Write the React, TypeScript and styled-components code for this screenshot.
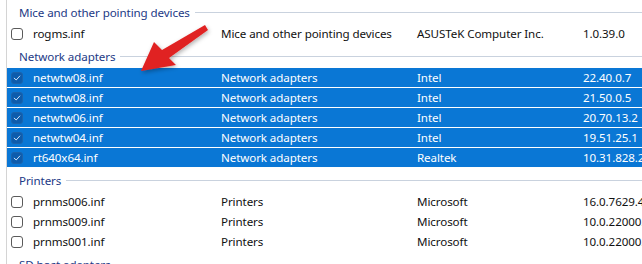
import React from "react";
import styled, { createGlobalStyle } from "styled-components";

const Global = createGlobalStyle`
  html, body { margin: 0; padding: 0; background: #fff; overflow: hidden; }
  body { font-family: "Noto Sans", "Open Sans", sans-serif; }
`;

const Page = styled.div`
  position: relative;
  width: 642px;
  height: 264px;
  overflow: hidden;
  background: #fff;
`;

const List = styled.div`
  margin-left: 6px;
  margin-top: -1px;
  border-left: 1px solid #d4d4d4;
  min-height: 280px;
  display: flex;
  flex-direction: column;
`;

const GroupHeader = styled.div`
  height: 24px;
  box-sizing: border-box;
  padding: 3px 0 1px 12px;
  display: flex;
  align-items: center;
  gap: 5px;
  font-size: 11.6px;
  letter-spacing: -0.1px;
  color: #1d3a86;
  white-space: nowrap;
  &::after {
    content: "";
    flex: 1;
    height: 1px;
    background: #c9d2de;
  }
`;

const Row = styled.div<{ $selected?: boolean }>`
  height: 20px;
  box-sizing: border-box;
  border-top: 1px solid #fff;
  display: grid;
  grid-template-columns: 22px 188px 196px 166px 1fr;
  align-items: center;
  padding-left: 4px;
  font-size: 11.6px;
  letter-spacing: -0.1px;
  white-space: nowrap;
  overflow: hidden;
  background: ${(p) => (p.$selected ? "#0a77d5" : "#fff")};
  color: ${(p) => (p.$selected ? "#fff" : "#111")};
`;

const Cell = styled.span`
  overflow: visible;
`;

const Box = styled.span<{ $checked?: boolean }>`
  width: 12px;
  height: 12px;
  box-sizing: border-box;
  border-radius: 3px;
  border: 1px solid ${(p) => (p.$checked ? "#1c63ac" : "#5a5a5a")};
  background: ${(p) => (p.$checked ? "#0d5cad" : "#fff")};
  display: flex;
  align-items: center;
  justify-content: center;
`;

const Arrow = styled.svg`
  position: absolute;
  left: 0;
  top: 0;
  pointer-events: none;
`;

type Item = { name: string; type: string; provider: string; version: string };
type Group = { title: string; selected?: boolean; items: Item[] };

const groups: Group[] = [
  {
    title: "Mice and other pointing devices",
    items: [
      { name: "rogms.inf", type: "Mice and other pointing devices", provider: "ASUSTeK Computer Inc.", version: "1.0.39.0" },
    ],
  },
  {
    title: "Network adapters",
    selected: true,
    items: [
      { name: "netwtw08.inf", type: "Network adapters", provider: "Intel", version: "22.40.0.7" },
      { name: "netwtw08.inf", type: "Network adapters", provider: "Intel", version: "21.50.0.5" },
      { name: "netwtw06.inf", type: "Network adapters", provider: "Intel", version: "20.70.13.2" },
      { name: "netwtw04.inf", type: "Network adapters", provider: "Intel", version: "19.51.25.1" },
      { name: "rt640x64.inf", type: "Network adapters", provider: "Realtek", version: "10.31.828.2020" },
    ],
  },
  {
    title: "Printers",
    items: [
      { name: "prnms006.inf", type: "Printers", provider: "Microsoft", version: "16.0.7629.4000" },
      { name: "prnms009.inf", type: "Printers", provider: "Microsoft", version: "10.0.22000.1" },
      { name: "prnms001.inf", type: "Printers", provider: "Microsoft", version: "10.0.22000.1" },
    ],
  },
  { title: "SD host adapters", items: [] },
];

const Check = () => (
  <svg width="8" height="8" viewBox="0 0 8 8">
    <path d="M1.2 4.2 L3.2 6 L6.8 2" fill="none" stroke="#cfe2f6" strokeWidth="1" strokeLinecap="round" strokeLinejoin="round" />
  </svg>
);

export default function App() {
  return (
    <Page>
      <Global />
      <List>
        {groups.map((g) => (
          <React.Fragment key={g.title}>
            <GroupHeader>{g.title}</GroupHeader>
            {g.items.map((it, i) => (
              <Row key={i} $selected={g.selected}>
                <Box $checked={g.selected}>{g.selected && <Check />}</Box>
                <Cell>{it.name}</Cell>
                <Cell>{it.type}</Cell>
                <Cell>{it.provider}</Cell>
                <Cell>{it.version}</Cell>
              </Row>
            ))}
          </React.Fragment>
        ))}
      </List>
      <Arrow width="642" height="264" viewBox="0 0 642 264">
        <defs>
          <filter id="sh" x="-20%" y="-20%" width="140%" height="140%">
            <feDropShadow dx="1" dy="2" stdDeviation="2" floodColor="#000" floodOpacity="0.3" />
          </filter>
        </defs>
        <polygon
          points="141,71 154,42 162,50 205,25 208,30 169,58 176,65"
          fill="#e02222"
          filter="url(#sh)"
        />
      </Arrow>
    </Page>
  );
}
